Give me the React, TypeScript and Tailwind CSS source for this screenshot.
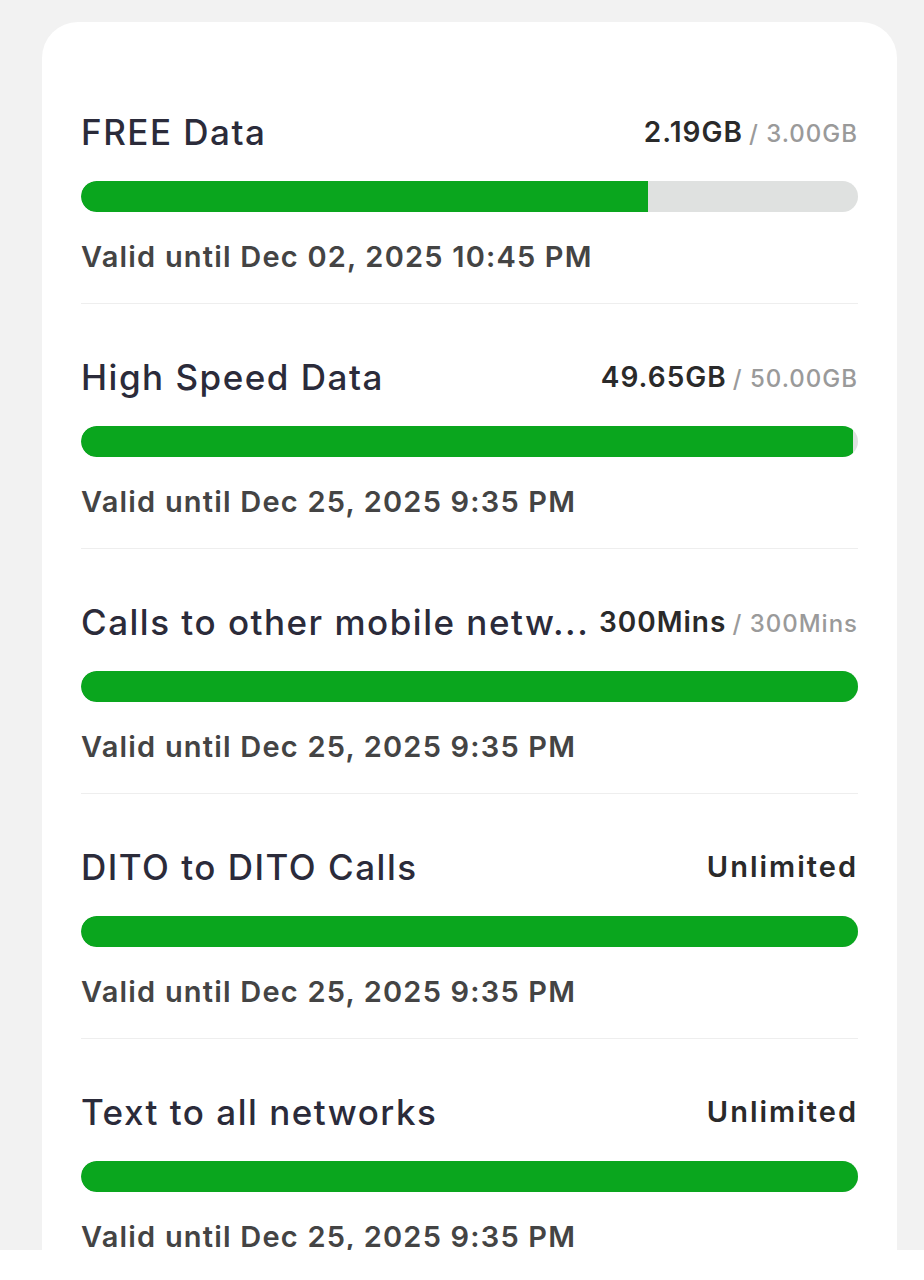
type Item = {
  title: string;
  used?: string;
  total?: string;
  pct: number;
  valid: string;
};

const items: Item[] = [
  { title: "FREE Data", used: "2.19GB", total: "3.00GB", pct: 73, valid: "Valid until Dec 02, 2025 10:45 PM" },
  { title: "High Speed Data", used: "49.65GB", total: "50.00GB", pct: 99.3, valid: "Valid until Dec 25, 2025 9:35 PM" },
  { title: "Calls to other mobile netw...", used: "300Mins", total: "300Mins", pct: 100, valid: "Valid until Dec 25, 2025 9:35 PM" },
  { title: "DITO to DITO Calls", used: "Unlimited", pct: 100, valid: "Valid until Dec 25, 2025 9:35 PM" },
  { title: "Text to all networks", used: "Unlimited", pct: 100, valid: "Valid until Dec 25, 2025 9:35 PM" },
];

function Row({ item }: { item: Item }) {
  return (
    <div className="pt-[51px] pb-[26px] border-b border-[#eeeeee]">
      <div className="flex items-center justify-between h-[44px]">
        <span className="min-w-0 truncate whitespace-nowrap text-[35px] font-medium text-[#2b2b3a] tracking-[1.5px]">
          {item.title}
        </span>
        <span className="shrink-0 flex items-baseline whitespace-nowrap">
          {item.total ? (
            <>
              <span className="text-[28px] font-semibold text-[#2a2a2a] tracking-[1px]">{item.used}</span>
              <span className="ml-[6px] text-[24px] font-medium text-[#9a9a9a] tracking-[1px]">/ {item.total}</span>
            </>
          ) : (
            <span className="text-[29px] font-semibold text-[#2a2a2a] tracking-[2px]">{item.used}</span>
          )}
        </span>
      </div>
      <div className="mt-[27px] h-[31px] rounded-full bg-[#dfe1e0] overflow-hidden">
        <div className="h-full bg-[#0aa61e] rounded-l-full" style={{ width: `${item.pct}%` }} />
      </div>
      <div className="mt-[25px] h-[40px] flex items-center whitespace-nowrap text-[29px] font-semibold text-[#444444] tracking-[1.2px]">
        {item.valid}
      </div>
    </div>
  );
}

export default function App() {
  return (
    <div
      className="h-[1280px] flex flex-col bg-white"
      style={{ fontFamily: "Inter, 'Open Sans', sans-serif" }}
    >
      <div className="flex-1 overflow-hidden bg-[#f2f2f2] pl-[42px] pr-[27px] pt-[22px]">
        <div className="bg-white rounded-t-[36px] px-[39px] pt-[37px] min-h-full">
          {items.map((it) => (
            <Row key={it.title} item={it} />
          ))}
        </div>
      </div>
      <div className="h-[30px] bg-white" />
    </div>
  );
}
